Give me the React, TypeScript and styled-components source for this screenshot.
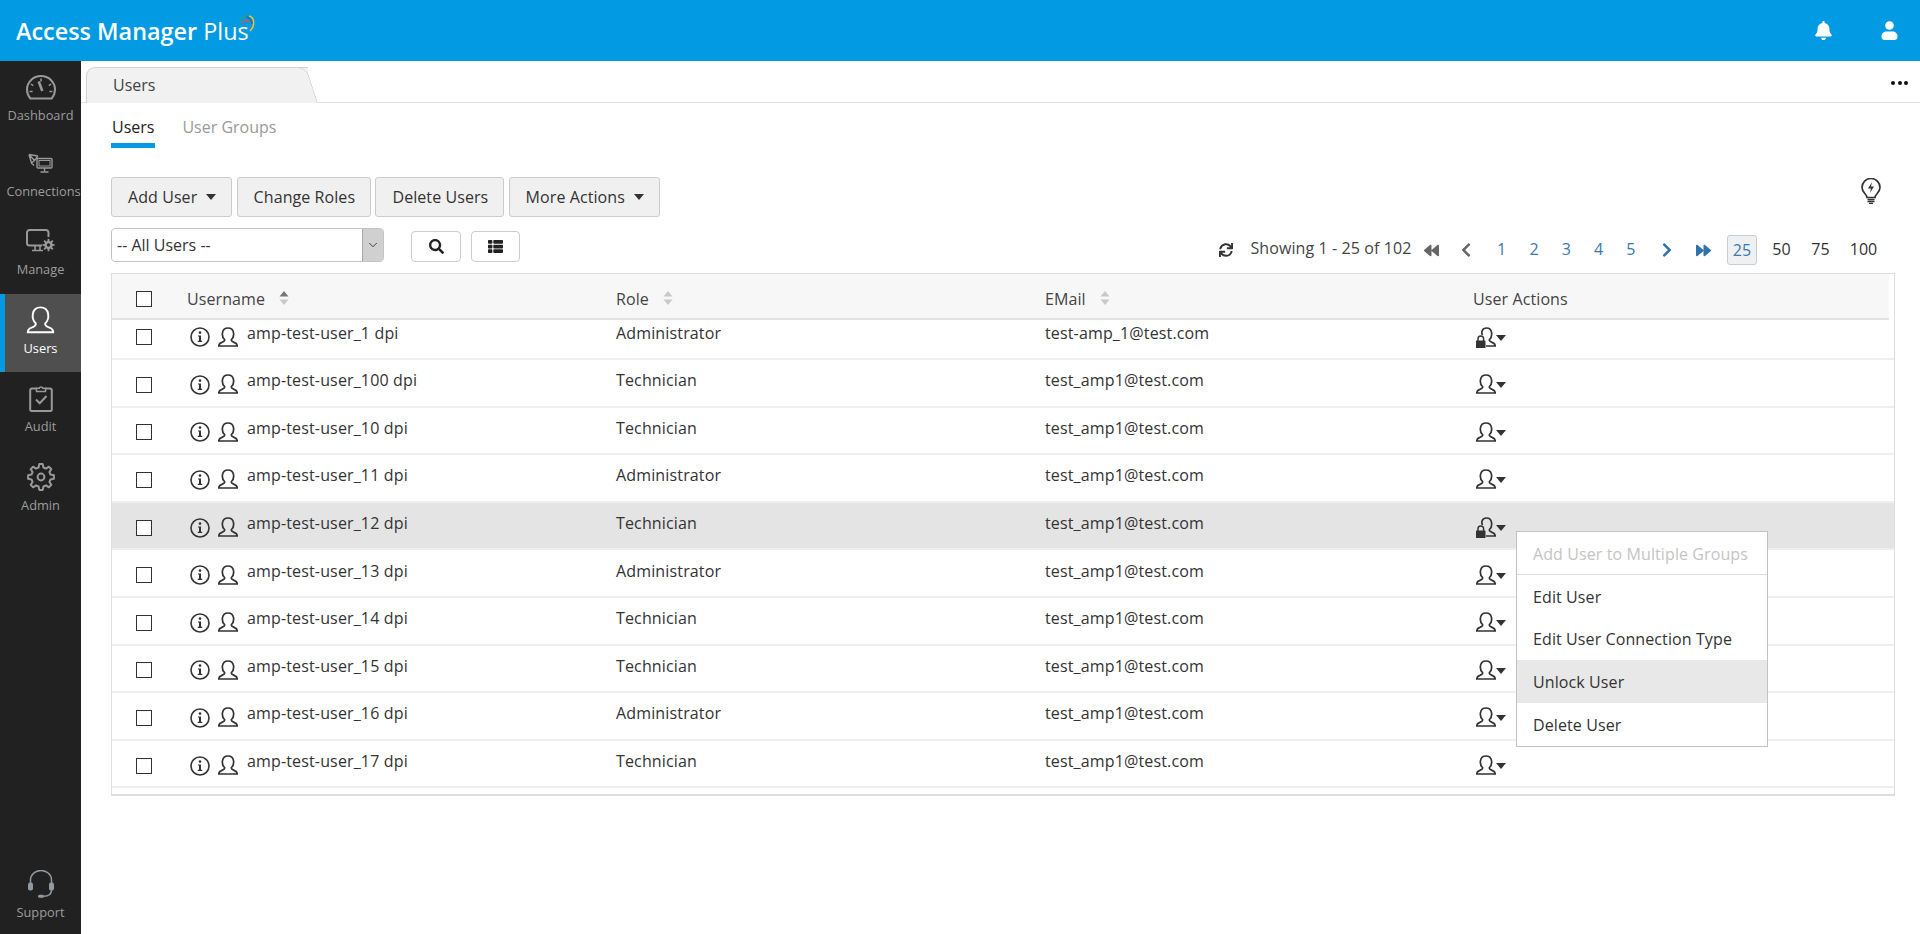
import React from 'react';
import styled, { createGlobalStyle } from 'styled-components';
import { FaBell, FaSearch, FaThList, FaSync, FaBackward, FaForward, FaChevronLeft, FaChevronRight } from 'react-icons/fa';
import { ChevronDown } from 'lucide-react';

const Global = createGlobalStyle`
  html, body { margin: 0; padding: 0; background: #fff; }
  body { font-family: "Open Sans", "Noto Sans", sans-serif; font-size: 16px; color: #333; }
  * { box-sizing: border-box; }
`;

const Page = styled.div`display: flex; flex-direction: column; height: 934px; overflow: hidden;`;
const TopBar = styled.header`
  flex: none; height: 61px; background: #039ae4; display: flex; align-items: center; justify-content: space-between;
  padding: 0 22px 0 16px; color: #fff;
`;
const Logo = styled.div`position: relative; font-size: 23.4px; font-weight: 600; line-height: 1; margin-top: 3px; white-space: nowrap;`;
const LogoLight = styled.span`font-weight: 400;`;
const LogoArc = styled.svg`position: absolute; right: -9px; top: -6px;`;
const TopIcons = styled.div`display: flex; align-items: center; gap: 48px;`;
const Body = styled.div`flex: 1; display: flex; min-height: 0;`;
const Sidebar = styled.nav`flex: none; width: 81px; background: #212121; display: flex; flex-direction: column; justify-content: space-between;`;
const NavGroup = styled.div`display: flex; flex-direction: column;`;
const NavItem = styled.div<{ $active?: boolean; $h: number }>`
  height: ${p => p.$h}px; padding-top: 11px; display: flex; flex-direction: column; align-items: center;
  color: ${p => (p.$active ? '#fff' : '#9c9c9c')};
  background: ${p => (p.$active ? '#4f4f4f' : 'transparent')};
  box-shadow: ${p => (p.$active ? 'inset 5px 0 0 #039ae4' : 'none')};
`;
const NavIcon = styled.div`height: 30px; display: flex; align-items: center; justify-content: center;`;
const NavLabel = styled.div<{ $shift?: number }>`
  margin-top: 4px; font-size: 12.8px; line-height: 18px; white-space: nowrap; margin-left: ${p => p.$shift ?? 0}px;
`;
const Main = styled.main`flex: 1; min-width: 0; display: flex; flex-direction: column;`;
const TabStrip = styled.div`
  flex: none; height: 42px; padding: 6px 12px 0 5px; border-bottom: 1px solid #e2e2e2;
  display: flex; justify-content: space-between; align-items: flex-end;
`;
const PageTab = styled.div`
  position: relative; width: 222px; height: 36px; margin-bottom: -1px; padding: 0 26px; line-height: 34px; font-size: 16px; color: #444;
  background: #f1f1f1; border: 1px solid #d2d2d2; border-bottom: 0; border-right: 0; border-radius: 9px 0 0 0;
  &::after {
    content: ''; position: absolute; right: -10px; top: -1px; bottom: 0; width: 20px; background: #f1f1f1;
    border: 1px solid #d2d2d2; border-left: 0; border-bottom: 0; border-radius: 0 9px 0 0; transform: skewX(18deg); transform-origin: bottom;
  }
`;
const Dots = styled.div`display: flex; gap: 2.5px; margin-bottom: 17px;`;
const Dot = styled.span`width: 4px; height: 4px; border-radius: 50%; background: #111;`;
const Content = styled.div`flex: 1; padding: 0 25px 0 30px; display: flex; flex-direction: column;`;
const SubTabs = styled.div`flex: none; display: flex; gap: 26px; height: 45px; padding-top: 12px;`;
const SubTab = styled.div<{ $active?: boolean }>`
  padding: 0 1px; height: 33px; line-height: 24px; font-size: 16px; color: ${p => (p.$active ? '#222' : '#999')};
  border-bottom: ${p => (p.$active ? '5px solid #039ae4' : '0')};
`;
const Toolbar = styled.div`flex: none; margin-top: 29px; height: 40px; display: flex; justify-content: space-between; align-items: flex-start;`;
const ButtonRow = styled.div`display: flex; gap: 4.3px;`;
const ActionButton = styled.div`
  height: 40px; padding: 0 15px 0 16px; display: flex; align-items: center; gap: 9px; font-size: 16px; letter-spacing: .08px; color: #333;
  background: #f0f0f0; border: 1px solid #ccc; border-radius: 3px; white-space: nowrap;
`;
const Caret = styled.span`width: 0; height: 0; border-left: 5.5px solid transparent; border-right: 5.5px solid transparent; border-top: 6px solid #333;`;
const Bulb = styled.svg`margin: 1px 14px 0 0;`;
const FilterRow = styled.div`flex: none; margin-top: 11px; height: 37px; display: flex; justify-content: space-between; align-items: flex-start;`;
const FilterLeft = styled.div`display: flex; align-items: flex-start;`;
const SelectBox = styled.div`
  width: 273px; height: 34px; display: flex; align-items: stretch; background: #fff; border: 1px solid #c4c4c4; border-radius: 4px; overflow: hidden;
`;
const SelectText = styled.div`flex: 1; padding-left: 5px; line-height: 32px; font-size: 16px; color: #333;`;
const SelectArrow = styled.div`width: 21px; display: flex; align-items: center; justify-content: center; background: #d0d0d0; border-left: 1px solid #aaa; color: #222;`;
const IconButton = styled.div<{ $w: number; $gap: number }>`
  width: ${p => p.$w}px; height: 31px; margin: 3px 0 0 ${p => p.$gap}px; display: flex; align-items: center; justify-content: center;
  background: #fff; border: 1px solid #ccc; border-radius: 4px; color: #222;
`;
const Pager = styled.div`height: 37px; padding: 7px 8px 0 0; display: flex; align-items: flex-start; font-size: 16px;`;
const PagerIcon = styled.span<{ $w: number; $color: string; $ml?: number }>`
  width: ${p => p.$w}px; height: 30px; margin-left: ${p => p.$ml ?? 0}px; display: flex; align-items: center; justify-content: center; color: ${p => p.$color}; flex: none;
`;
const Showing = styled.span`line-height: 30px; margin: -2px 9px 0 16px; font-size: 16px; letter-spacing: .1px; color: #444; white-space: nowrap;`;
const PageNum = styled.span`width: 32.3px; height: 30px; line-height: 29px; text-align: center; color: #3a78b0; flex: none;`;
const SizeNum = styled.span<{ $active?: boolean; $w: number; $ml?: number }>`
  width: ${p => p.$w}px; height: 30px; line-height: 29px; text-align: center; flex: none; margin-left: ${p => p.$ml ?? 0}px;
  color: ${p => (p.$active ? '#3a78b0' : '#333')}; background: ${p => (p.$active ? '#eef0f2' : 'transparent')};
  border: ${p => (p.$active ? '1px solid #ccc' : '0')}; border-radius: 3px;
`;
const Table = styled.div`flex: none; margin-top: 8px; border: 1px solid #dedede; border-bottom-width: 2px; display: flex; flex-direction: column; height: 523px;`;
const HeaderRow = styled.div`
  flex: none; height: 46px; padding-top: 6px; margin-right: 5px; background: #f7f7f7; border-bottom: 2px solid #e2e2e2;
  display: grid; grid-template-columns: 75px 429px 429px 428px 1fr; align-items: center; font-size: 16px; letter-spacing: .1px; color: #444;
`;
const TableBody = styled.div`flex: 1; overflow: hidden; min-height: 0;`;
const Row = styled.div<{ $selected?: boolean; $clip?: boolean }>`
  height: 47.6px; padding-top: 4px; display: grid; grid-template-columns: 75px 429px 429px 428px 1fr; align-items: center;
  margin-top: ${p => (p.$clip ? '-7.6px' : '0')};
  background: ${p => (p.$selected ? '#e4e4e4' : '#fff')}; border-bottom: 2px solid #efefef; font-size: 16px; letter-spacing: .15px; color: #333;
`;
const CheckCell = styled.div`display: flex; padding-left: 24px;`;
const Check = styled.span`width: 16px; height: 16px; border: 1.5px solid #333; background: #fff; display: block;`;
const HeadLabel = styled.div`display: flex; align-items: center; gap: 14px;`;
const SortIcon = styled.svg`flex: none; margin-top: -3px;`;
const NameCell = styled.div`display: flex; align-items: center; padding-left: 3px;`;
const NameText = styled.span`margin: -9px 0 0 9px; white-space: nowrap;`;
const CellText = styled.span`margin-top: -9px; white-space: nowrap;`;
const RowIcon = styled.svg`flex: none; display: block;`;
const GapIcon = styled(RowIcon)<{ $gap: number }>`margin-left: ${p => p.$gap}px;`;
const ActionCell = styled.div`position: relative; align-self: stretch; display: flex; align-items: center; padding: 0 0 0 3px;`;
const ActionCaret = styled.span`margin: 1px 0 0 0; width: 0; height: 0; border-left: 5.5px solid transparent; border-right: 5.5px solid transparent; border-top: 6px solid #333;`;
const Menu = styled.div`
  position: absolute; left: 43px; top: 24px; width: 252px; background: #fff; border: 1px solid #c2c2c2; z-index: 3; font-size: 16px; letter-spacing: .1px; color: #333;
`;
const MenuItem = styled.div<{ $disabled?: boolean; $hover?: boolean; $divider?: boolean }>`
  height: ${p => (p.$divider ? '43px' : '42.7px')}; line-height: 44px; padding-left: 16px; white-space: nowrap;
  color: ${p => (p.$disabled ? '#c4c4c4' : '#333')};
  background: ${p => (p.$hover ? '#e8e8e8' : '#fff')};
  border-bottom: ${p => (p.$divider ? '1px solid #ddd' : '0')};
`;

const PersonPath = 'M6.5 12.5C3.300 9.500 3.200 1 10 1c6.800 0 6.700 8.500 3.500 11.500-.6 1.200.7 2.300 3 3.100 2.400.8 2.700 2.400 2.700 3.400H.8c0-1 .3-2.600 2.700-3.400 2.300-.8 3.600-1.900 3-3.100Z';
const Person: React.FC<{ gap?: number }> = ({ gap = 8 }) => (
  <GapIcon $gap={gap} width="20" height="21" viewBox="0 0 20 21" fill="none"><path d={PersonPath} stroke="#333" strokeWidth="1.7" /></GapIcon>
);
const Info = () => (
  <RowIcon width="20" height="20" viewBox="0 0 20 20" fill="none">
    <circle cx="10" cy="10" r="9" stroke="#333" strokeWidth="1.6" />
    <circle cx="10" cy="5.6" r="1.3" fill="#333" />
    <path d="M8 8.400h3v5.400h1.200v1.200H7.800v-1.200H9V9.600H8Z" fill="#333" />
  </RowIcon>
);
const LockedPerson = () => (
  <RowIcon width="20" height="21" viewBox="0 0 20 21" fill="none">
    <path d="M6.500 8C5 5 6.200 1 10.500 1c6.300 0 6.200 8.500 3 11.500-.6 1.200.7 2.300 3 3.100 2.400.8 2.700 2.400 2.700 3.400H10" stroke="#333" strokeWidth="1.7" />
    <path d="M2 14v-2.200a2.800 2.800 0 0 1 5.600 0V14" stroke="#333" strokeWidth="1.5" />
    <rect x="0" y="13.500" width="9.500" height="7.500" rx=".6" fill="#333" />
  </RowIcon>
);
function gearPath(cx: number, cy: number, r1: number, r2: number, teeth: number): string {
  const pts: string[] = [];
  const step = (Math.PI * 2) / teeth;
  for (let i = 0; i < teeth; i++) {
    const a = i * step - Math.PI / 2;
    const list: [number, number][] = [[r2, a - step * 0.17], [r2, a + step * 0.17], [r1, a + step * 0.32], [r1, a + step * 0.68]];
    list.forEach(([r, t]) => pts.push(`${(cx + r * Math.cos(t)).toFixed(2)} ${(cy + r * Math.sin(t)).toFixed(2)}`));
  }
  return `M${pts.join('L')}Z`;
}
const GaugeIcon = () => (
  <svg width="30" height="25" viewBox="0 0 30 25" fill="none" stroke="#999" strokeWidth="2">
    <path d="M4.400 23.600C2.200 21 1 17.900 1 14.600 1 6.900 7.300 1 15 1s14 5.900 14 13.600c0 3.300-1.200 6.400-3.400 9Z" />
    <path d="M15 3.500v3M5 9l2.200 1.600M25 9l-2.200 1.600M3.600 16.500h3M23.400 16.500h3" strokeWidth="1.5" />
    <path d="M12.700 6.500l3.600 9.500" strokeWidth="2.6" />
  </svg>
);
const ConnIcon = () => (
  <svg width="25" height="20" viewBox="0 0 25 20" fill="none" stroke="#999" strokeWidth="1.4">
    <path d="M1 1.500l9 1.500M1 1.500l2.500 8.500 3-2.500M1 1.500l5.500 6M10 3L6.500 7.500M3.500 10l2.500 2.500" />
    <rect x="9" y="5.500" width="15" height="9.500" rx="1" fill="#212121" />
    <rect x="11" y="7.500" width="11" height="5.500" strokeWidth="1" />
    <path d="M16.500 15v3M12.500 19h8" />
  </svg>
);
const ManageIcon = () => (
  <svg width="29" height="24" viewBox="0 0 29 24" fill="none" stroke="#999" strokeWidth="2">
    <path d="M16 16.500H3.500A2.500 2.500 0 0 1 1 14V3.500A2.500 2.500 0 0 1 3.500 1H20a2.500 2.500 0 0 1 2.500 2.500V8" />
    <path d="M9 17v4M14 17v4M6 21.500h11" strokeWidth="1.6" />
    <path d={gearPath(22.5, 16, 4.2, 6.2, 8)} fill="#999" stroke="none" />
    <circle cx="22.5" cy="16" r="1.7" fill="#212121" stroke="none" />
  </svg>
);
const AuditIcon = () => (
  <svg width="24" height="28" viewBox="0 0 24 28" fill="none" stroke="#999" strokeWidth="2">
    <path d="M7.500 4.500H3A1.800 1.800 0 0 0 1.200 6.300v19.500A1.300 1.300 0 0 0 2.500 27h19a1.300 1.300 0 0 0 1.300-1.300V6.300A1.800 1.800 0 0 0 21 4.500h-4.500" />
    <path d="M7.500 7.500V4.300h2.700a1.900 1.900 0 0 1 3.600 0h2.700v3.200Z" strokeWidth="1.5" />
    <path d="M7 15.500l3.700 3.700L17.500 12" strokeWidth="2" />
  </svg>
);
const AdminIcon = () => (
  <svg width="28" height="28" viewBox="0 0 28 28" fill="none" stroke="#999">
    <path d={gearPath(14, 14, 9.8, 13, 8)} strokeWidth="2" strokeLinejoin="round" />
    <circle cx="14" cy="14" r="3.4" strokeWidth="2" />
  </svg>
);
const SupportIcon = () => (
  <svg width="26" height="28" viewBox="0 0 26 28" fill="none" stroke="#8f9aa3">
    <path d="M2.500 14V10a10.500 9.500 0 0 1 21 0v4" strokeWidth="1.5" />
    <rect x="0" y="12.500" width="5" height="8" rx="2" fill="#8f9aa3" stroke="none" />
    <rect x="21" y="12.500" width="5" height="8" rx="2" fill="#8f9aa3" stroke="none" />
    <path d="M23.500 20c0 4-3 6.300-8 6.300" strokeWidth="1.5" />
    <rect x="10" y="24.800" width="6" height="3" rx="1.500" fill="#8f9aa3" stroke="none" />
  </svg>
);
const Sort: React.FC<{ $active?: boolean }> = ({ $active }) => (
  <SortIcon width="10" height="14" viewBox="0 0 10 14">
    <path d="M5 0l4.500 5.500H.5Z" fill={$active ? '#777' : '#c8c8c8'} />
    <path d="M5 14l4.500-5.500H.5Z" fill="#c8c8c8" />
  </SortIcon>
);

const rows = [
  ['amp-test-user_1 dpi', 'Administrator', 'test-amp_1@test.com', true],
  ['amp-test-user_100 dpi', 'Technician', 'test_amp1@test.com', false],
  ['amp-test-user_10 dpi', 'Technician', 'test_amp1@test.com', false],
  ['amp-test-user_11 dpi', 'Administrator', 'test_amp1@test.com', false],
  ['amp-test-user_12 dpi', 'Technician', 'test_amp1@test.com', true],
  ['amp-test-user_13 dpi', 'Administrator', 'test_amp1@test.com', false],
  ['amp-test-user_14 dpi', 'Technician', 'test_amp1@test.com', false],
  ['amp-test-user_15 dpi', 'Technician', 'test_amp1@test.com', false],
  ['amp-test-user_16 dpi', 'Administrator', 'test_amp1@test.com', false],
  ['amp-test-user_17 dpi', 'Technician', 'test_amp1@test.com', false],
] as const;

export default function App() {
  return (
    <Page>
      <Global />
      <TopBar>
        <Logo>
          Access Manager <LogoLight>Plus</LogoLight>
          <LogoArc width="20" height="20" viewBox="0 0 20 20" fill="none" strokeWidth="1.5">
            <path d="M2 7C4 3 8 1.500 11 2" stroke="#2e9e6b" />
            <path d="M4 9c2-2 5-3 8-1" stroke="#d9534f" />
            <path d="M11 2c5 1 7 9 1 15" stroke="#f2c230" />
            <path d="M8 3c3 0 6 3 6 7" stroke="#1b6fb8" />
          </LogoArc>
        </Logo>
        <TopIcons>
          <FaBell size={19} color="#fff" />
          <svg width="17" height="19" viewBox="0 0 17 19" fill="#fff">
            <circle cx="8.5" cy="4.500" r="4.300" />
            <path d="M.5 15.500c0-3.500 2.500-5 5-5h6c2.500 0 5 1.500 5 5v.5c0 2-1.500 3-3 3h-10c-1.500 0-3-1-3-3Z" />
          </svg>
        </TopIcons>
      </TopBar>
      <Body>
        <Sidebar>
          <NavGroup>
            <NavItem $h={76}><NavIcon><GaugeIcon /></NavIcon><NavLabel>Dashboard</NavLabel></NavItem>
            <NavItem $h={78}><NavIcon><ConnIcon /></NavIcon><NavLabel $shift={6}>Connections</NavLabel></NavItem>
            <NavItem $h={79}><NavIcon><ManageIcon /></NavIcon><NavLabel>Manage</NavLabel></NavItem>
            <NavItem $h={78} $active>
              <NavIcon><svg width="29" height="29" viewBox="0 0 20 21" fill="none"><path d={PersonPath} stroke="#fff" strokeWidth="1.4" /></svg></NavIcon>
              <NavLabel>Users</NavLabel>
            </NavItem>
            <NavItem $h={79}><NavIcon><AuditIcon /></NavIcon><NavLabel>Audit</NavLabel></NavItem>
            <NavItem $h={78}><NavIcon><AdminIcon /></NavIcon><NavLabel>Admin</NavLabel></NavItem>
          </NavGroup>
          <NavItem $h={76}><NavIcon><SupportIcon /></NavIcon><NavLabel>Support</NavLabel></NavItem>
        </Sidebar>
        <Main>
          <TabStrip>
            <PageTab>Users</PageTab>
            <Dots><Dot /><Dot /><Dot /></Dots>
          </TabStrip>
          <Content>
            <SubTabs>
              <SubTab $active>Users</SubTab>
              <SubTab>User Groups</SubTab>
            </SubTabs>
            <Toolbar>
              <ButtonRow>
                <ActionButton>Add User <Caret /></ActionButton>
                <ActionButton>Change Roles</ActionButton>
                <ActionButton>Delete Users</ActionButton>
                <ActionButton>More Actions <Caret /></ActionButton>
              </ButtonRow>
              <Bulb width="20" height="26" viewBox="0 0 20 26" fill="none" stroke="#333" strokeWidth="1.7">
                <path d="M6 19.500c0-3-5-5-5-10a9 9 0 0 1 18 0c0 5-5 7-5 10Z" />
                <path d="M6.500 21.500h7M6.500 23.500h7M8 25.500h4" />
                <path d="M11 4L7 10.500h3L9 15l4-6.500h-3Z" fill="#333" stroke="none" />
              </Bulb>
            </Toolbar>
            <FilterRow>
              <FilterLeft>
                <SelectBox>
                  <SelectText>-- All Users --</SelectText>
                  <SelectArrow><ChevronDown size={14} strokeWidth={1.4} /></SelectArrow>
                </SelectBox>
                <IconButton $w={50} $gap={27}><FaSearch size={15} /></IconButton>
                <IconButton $w={49} $gap={10}><FaThList size={15} /></IconButton>
              </FilterLeft>
              <Pager>
                <PagerIcon $w={16} $color="#333"><FaSync size={14} /></PagerIcon>
                <Showing>Showing 1 - 25 of 102</Showing>
                <PagerIcon $w={21} $color="#666"><FaBackward size={15} /></PagerIcon>
                <PagerIcon $w={40} $ml={4} $color="#666"><FaChevronLeft size={16} /></PagerIcon>
                <PageNum>1</PageNum>
                <PageNum>2</PageNum>
                <PageNum>3</PageNum>
                <PageNum>4</PageNum>
                <PageNum>5</PageNum>
                <PagerIcon $w={40} $color="#2f72ad"><FaChevronRight size={16} /></PagerIcon>
                <PagerIcon $w={32} $color="#2f72ad"><FaForward size={15} /></PagerIcon>
                <SizeNum $active $w={30} $ml={8}>25</SizeNum>
                <SizeNum $w={39} $ml={5}>50</SizeNum>
                <SizeNum $w={39}>75</SizeNum>
                <SizeNum $w={47}>100</SizeNum>
              </Pager>
            </FilterRow>
            <Table>
              <HeaderRow>
                <CheckCell><Check /></CheckCell>
                <HeadLabel>Username <Sort $active /></HeadLabel>
                <HeadLabel>Role <Sort /></HeadLabel>
                <HeadLabel>EMail <Sort /></HeadLabel>
                <HeadLabel>User Actions</HeadLabel>
              </HeaderRow>
              <TableBody>
                {rows.map(([name, role, email, locked], i) => (
                  <Row key={name} $clip={i === 0} $selected={i === 4}>
                    <CheckCell><Check /></CheckCell>
                    <NameCell><Info /><Person /><NameText>{name}</NameText></NameCell>
                    <CellText>{role}</CellText>
                    <CellText>{email}</CellText>
                    <ActionCell>
                      {locked ? <LockedPerson /> : <Person gap={0} />}
                      <ActionCaret />
                      {i === 4 && (
                        <Menu>
                          <MenuItem $disabled $divider>Add User to Multiple Groups</MenuItem>
                          <MenuItem>Edit User</MenuItem>
                          <MenuItem>Edit User Connection Type</MenuItem>
                          <MenuItem $hover>Unlock User</MenuItem>
                          <MenuItem>Delete User</MenuItem>
                        </Menu>
                      )}
                    </ActionCell>
                  </Row>
                ))}
              </TableBody>
            </Table>
          </Content>
        </Main>
      </Body>
    </Page>
  );
}
